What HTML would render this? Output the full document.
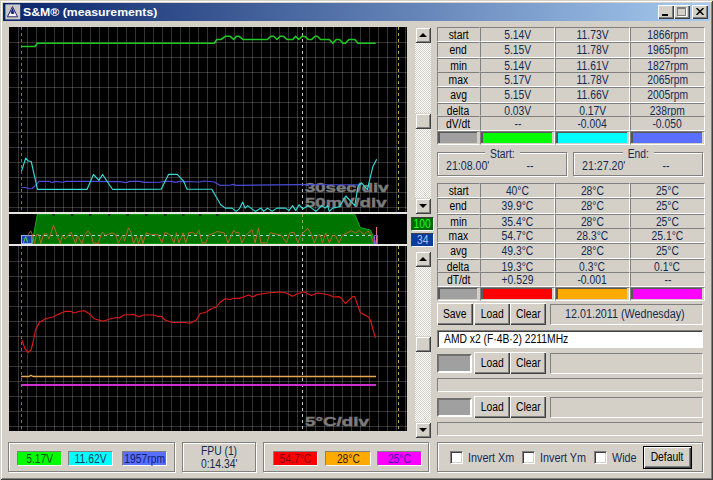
<!DOCTYPE html>
<html><head><meta charset="utf-8"><title>S&amp;M (measurements)</title>
<style>
html,body{margin:0;padding:0;}
body{width:713px;height:480px;overflow:hidden;background:#d4d0c8;position:relative;
 font-family:"Liberation Sans",sans-serif;font-size:12px;line-height:14px;color:#000;}
*{box-sizing:border-box;}
.a{position:absolute;}
.win{left:0;top:0;width:713px;height:480px;background:#d4d0c8;
 box-shadow:inset 1px 1px 0 #d4d0c8, inset -1px -1px 0 #404040, inset 2px 2px 0 #fff, inset -2px -2px 0 #808080;}
.title{left:3px;top:3px;width:707px;height:18px;background:linear-gradient(90deg,#0a246a 0%,#a6caf0 100%);}
.ttext{left:23px;top:4px;height:16px;line-height:16px;color:#fff;font-weight:bold;font-size:11px;white-space:nowrap;transform-origin:0 50%;transform:scaleX(1.114);}
.cb{top:5px;width:16px;height:14px;background:#d4d0c8;
 box-shadow:inset 1px 1px 0 #fff, inset -1px -1px 0 #404040, inset -2px -2px 0 #808080;}
.sunk{border:1px solid;border-color:#808080 #fff #fff #808080;background:#d4d0c8;}
.cell{display:flex;justify-content:center;text-align:center;white-space:nowrap;overflow:visible;line-height:13px;padding-top:1px;}
.t{display:inline-block;transform:scaleX(.86);transform-origin:50% 50%;white-space:nowrap;}
.tl{display:inline-block;transform:scaleX(.86);transform-origin:0 50%;white-space:nowrap;}
.nv{color:#142a52;}
.btn{background:#d4d0c8;display:flex;justify-content:center;text-align:center;padding-top:1px;white-space:nowrap;
 box-shadow:inset 1px 1px 0 #fff, inset -1px -1px 0 #404040, inset -2px -2px 0 #808080;}
.track{background-color:#d4d0c8;background-image:
 linear-gradient(45deg,#fff 25%,transparent 25%,transparent 75%,#fff 75%),
 linear-gradient(45deg,#fff 25%,transparent 25%,transparent 75%,#fff 75%);
 background-size:2px 2px;background-position:0 0,1px 1px;}
.sbb{left:0;width:16px;height:16px;background:#d4d0c8;
 box-shadow:inset 1px 1px 0 #d4d0c8, inset -1px -1px 0 #404040, inset 2px 2px 0 #fff, inset -2px -2px 0 #808080;}
.arr{left:4px;width:0;height:0;border-left:4px solid transparent;border-right:4px solid transparent;}
.up{top:6px;border-bottom:4px solid #000;}
.dn{top:6px;border-top:4px solid #000;}
.sw{border:1px solid;border-color:#606060 #fff #fff #606060;}
.grp{border:1px solid #808080;box-shadow:1px 1px 0 #fff, inset 1px 1px 0 #fff;}
.lbl{height:15px;line-height:13px;padding-top:1px;display:flex;justify-content:center;text-align:center;border:1px solid;border-color:#808080 #fff #fff #808080;white-space:nowrap;}
.chk{width:13px;height:13px;background:#fff;border:1px solid;border-color:#808080 #fff #fff #808080;box-shadow:inset 1px 1px 0 #404040, inset -1px -1px 0 #d4d0c8;}
</style></head>
<body>
<div class="a win"></div>
<div class="a title"></div>
<svg class="a" style="left:5px;top:4px" width="16" height="16" viewBox="0 0 16 16"><rect x="0.4" y="0.4" width="14.8" height="15" fill="#c9c9c9"/><path d="M7.5 2.6 L12.6 12.8 L2.4 12.8 Z" fill="#dcdcec"/><path d="M4.6 10 L10.4 10 L12 12.6 L3 12.6 Z" fill="#f6f6fc"/><path d="M7.5 2.6 L12.6 12.8 L2.4 12.8 Z" fill="none" stroke="#2c2c6c" stroke-width="1"/><circle cx="7.5" cy="8" r="1.9" fill="#3030c0"/><path d="M7.5 4.4 L7.5 6.6 M7.2 8 L8.2 9.6" stroke="#101050" stroke-width="1.1"/></svg>
<div class="a ttext" id="ttext">S&amp;M® (measurements)</div>
<div class="a cb" style="left:658px"><div class="a" style="left:4px;top:9px;width:6px;height:2px;background:#000"></div></div>
<div class="a cb" style="left:674px"><div class="a" style="left:3px;top:2px;width:9px;height:9px;border:1px solid #808080;border-top-width:2px;box-shadow:1px 1px 0 #fff"></div></div>
<div class="a cb" style="left:692px"><svg class="a" style="left:4px;top:3px" width="8" height="7" viewBox="0 0 8 7"><path d="M0.5 0 L7.5 7 M7.5 0 L0.5 7" stroke="#000" stroke-width="1.5"/></svg></div>
<div class="a" style="left:9px;top:27px;width:398px;height:404px;background:#000"></div>
<svg class="a" style="left:9px;top:27px" width="398" height="404" viewBox="9 27 398 404"><rect x="9" y="27" width="398" height="404" fill="#000"/><g fill="#fff" fill-opacity=".2" shape-rendering="crispEdges"><rect x="18" y="27" width="1" height="185"/><rect x="18" y="246" width="1" height="185"/><rect x="27" y="27" width="1" height="185"/><rect x="27" y="246" width="1" height="185"/><rect x="36" y="27" width="1" height="185"/><rect x="36" y="246" width="1" height="185"/><rect x="45" y="27" width="1" height="185"/><rect x="45" y="246" width="1" height="185"/><rect x="54" y="27" width="1" height="185"/><rect x="54" y="246" width="1" height="185"/><rect x="63" y="27" width="1" height="185"/><rect x="63" y="246" width="1" height="185"/><rect x="72" y="27" width="1" height="185"/><rect x="72" y="246" width="1" height="185"/><rect x="81" y="27" width="1" height="185"/><rect x="81" y="246" width="1" height="185"/><rect x="90" y="27" width="1" height="185"/><rect x="90" y="246" width="1" height="185"/><rect x="99" y="27" width="1" height="185"/><rect x="99" y="246" width="1" height="185"/><rect x="108" y="27" width="1" height="185"/><rect x="108" y="246" width="1" height="185"/><rect x="117" y="27" width="1" height="185"/><rect x="117" y="246" width="1" height="185"/><rect x="126" y="27" width="1" height="185"/><rect x="126" y="246" width="1" height="185"/><rect x="135" y="27" width="1" height="185"/><rect x="135" y="246" width="1" height="185"/><rect x="144" y="27" width="1" height="185"/><rect x="144" y="246" width="1" height="185"/><rect x="153" y="27" width="1" height="185"/><rect x="153" y="246" width="1" height="185"/><rect x="162" y="27" width="1" height="185"/><rect x="162" y="246" width="1" height="185"/><rect x="171" y="27" width="1" height="185"/><rect x="171" y="246" width="1" height="185"/><rect x="180" y="27" width="1" height="185"/><rect x="180" y="246" width="1" height="185"/><rect x="189" y="27" width="1" height="185"/><rect x="189" y="246" width="1" height="185"/><rect x="198" y="27" width="1" height="185"/><rect x="198" y="246" width="1" height="185"/><rect x="207" y="27" width="1" height="185"/><rect x="207" y="246" width="1" height="185"/><rect x="216" y="27" width="1" height="185"/><rect x="216" y="246" width="1" height="185"/><rect x="225" y="27" width="1" height="185"/><rect x="225" y="246" width="1" height="185"/><rect x="234" y="27" width="1" height="185"/><rect x="234" y="246" width="1" height="185"/><rect x="243" y="27" width="1" height="185"/><rect x="243" y="246" width="1" height="185"/><rect x="252" y="27" width="1" height="185"/><rect x="252" y="246" width="1" height="185"/><rect x="261" y="27" width="1" height="185"/><rect x="261" y="246" width="1" height="185"/><rect x="270" y="27" width="1" height="185"/><rect x="270" y="246" width="1" height="185"/><rect x="279" y="27" width="1" height="185"/><rect x="279" y="246" width="1" height="185"/><rect x="288" y="27" width="1" height="185"/><rect x="288" y="246" width="1" height="185"/><rect x="297" y="27" width="1" height="185"/><rect x="297" y="246" width="1" height="185"/><rect x="306" y="27" width="1" height="185"/><rect x="306" y="246" width="1" height="185"/><rect x="315" y="27" width="1" height="185"/><rect x="315" y="246" width="1" height="185"/><rect x="324" y="27" width="1" height="185"/><rect x="324" y="246" width="1" height="185"/><rect x="333" y="27" width="1" height="185"/><rect x="333" y="246" width="1" height="185"/><rect x="342" y="27" width="1" height="185"/><rect x="342" y="246" width="1" height="185"/><rect x="351" y="27" width="1" height="185"/><rect x="351" y="246" width="1" height="185"/><rect x="360" y="27" width="1" height="185"/><rect x="360" y="246" width="1" height="185"/><rect x="369" y="27" width="1" height="185"/><rect x="369" y="246" width="1" height="185"/><rect x="378" y="27" width="1" height="185"/><rect x="378" y="246" width="1" height="185"/><rect x="387" y="27" width="1" height="185"/><rect x="387" y="246" width="1" height="185"/><rect x="396" y="27" width="1" height="185"/><rect x="396" y="246" width="1" height="185"/><rect x="405" y="27" width="1" height="185"/><rect x="405" y="246" width="1" height="185"/><rect x="9" y="42" width="398" height="1"/><rect x="9" y="261" width="398" height="1"/><rect x="9" y="57" width="398" height="1"/><rect x="9" y="276" width="398" height="1"/><rect x="9" y="72" width="398" height="1"/><rect x="9" y="291" width="398" height="1"/><rect x="9" y="87" width="398" height="1"/><rect x="9" y="306" width="398" height="1"/><rect x="9" y="102" width="398" height="1"/><rect x="9" y="321" width="398" height="1"/><rect x="9" y="117" width="398" height="1"/><rect x="9" y="336" width="398" height="1"/><rect x="9" y="132" width="398" height="1"/><rect x="9" y="351" width="398" height="1"/><rect x="9" y="147" width="398" height="1"/><rect x="9" y="366" width="398" height="1"/><rect x="9" y="162" width="398" height="1"/><rect x="9" y="381" width="398" height="1"/><rect x="9" y="177" width="398" height="1"/><rect x="9" y="396" width="398" height="1"/><rect x="9" y="192" width="398" height="1"/><rect x="9" y="411" width="398" height="1"/><rect x="9" y="207" width="398" height="1"/><rect x="9" y="426" width="398" height="1"/></g><g shape-rendering="crispEdges"><line x1="21.5" y1="27" x2="21.5" y2="212" stroke="#2e86a4" stroke-width="1" stroke-dasharray="3 3"/><line x1="21.5" y1="246" x2="21.5" y2="431" stroke="#2e86a4" stroke-width="1" stroke-dasharray="3 3"/><line x1="302.5" y1="27" x2="302.5" y2="212" stroke="#c8c8c8" stroke-width="1" stroke-dasharray="3 3"/><line x1="302.5" y1="246" x2="302.5" y2="431" stroke="#c8c8c8" stroke-width="1" stroke-dasharray="3 3"/><line x1="398.5" y1="27" x2="398.5" y2="212" stroke="#c0a458" stroke-width="1" stroke-dasharray="3 3"/><line x1="398.5" y1="246" x2="398.5" y2="431" stroke="#c0a458" stroke-width="1" stroke-dasharray="3 3"/></g><g font-family="Liberation Sans, sans-serif" font-weight="bold" fill="#7c7c7c" stroke="#7c7c7c" stroke-width="0.45"><text x="305" y="191.8" font-size="12.5" textLength="83.5" lengthAdjust="spacingAndGlyphs">30sec/div</text><text x="305" y="206.6" font-size="13.5" textLength="81.5" lengthAdjust="spacingAndGlyphs">50mV/div</text><text x="305" y="426.2" font-size="13.5" textLength="64" lengthAdjust="spacingAndGlyphs">5°C/div</text></g><polyline points="21.5,46.5 35.0,46.5 37.5,43.3 214.3,43.3 216.8,39.5 221.0,39.5 225.2,36.3 230.2,36.3 233.7,39.5 236.5,36.3 239.3,36.3 242.8,39.5 267.3,39.5 270.8,36.3 273.6,36.3 276.9,39.5 280.0,36.3 283.5,36.3 287.0,39.5 292.8,39.5 295.6,36.3 298.7,39.5 301.9,36.3 305.4,36.7 308.2,39.5 311.7,39.5 315.0,36.3 317.3,36.3 320.6,39.5 329.3,39.5 332.8,43.3 336.3,39.5 339.4,39.5 343.0,43.3 345.4,43.3 348.9,39.5 354.8,39.5 358.0,43.3 375.8,43.3" fill="none" stroke="#1ec81e" stroke-width="1.6" stroke-linejoin="round" /><polyline points="21.5,187.5 25.7,187.5 29.0,188.8 32.4,188.5 39.1,181.4 50.0,181.4 52.0,182.6 55.0,181.4 63.0,182.3 66.0,181.4 85.0,181.4 120.0,181.6 126.0,182.6 130.0,181.4 140.0,181.4 144.0,182.4 160.0,182.2 164.0,181.2 172.0,181.4 175.0,182.4 180.0,181.4 200.0,182.0 204.0,181.0 214.3,182.0 220.2,185.4 230.0,185.2 233.0,184.4 236.0,185.4 300.0,184.6 330.0,184.8 360.0,184.8" fill="none" stroke="#4c4cdc" stroke-width="1.15" stroke-linejoin="round" /><polyline points="21.5,171.1 25.7,158.2 28.2,161.0 31.2,161.5 37.5,189.3 87.1,189.3 93.5,174.5 98.9,180.4 102.6,174.5 112.4,189.3 161.2,189.2 168.5,174.4 177.2,174.4 183.6,181.1 187.0,189.2 211.8,189.2 220.7,204.7 225.2,208.1 232.0,208.1 236.2,211.4 239.3,208.9 242.6,202.2 245.2,208.1 247.7,205.6 255.3,211.4 261.1,208.1 263.7,211.4 267.4,208.1 272.1,211.4 276.8,208.1 285.6,208.1 288.9,210.6 292.6,205.6 295.7,210.6 299.0,204.7 302.7,208.9 308.3,205.6 315.9,211.4 321.8,205.6 325.1,208.1 327.6,205.6 329.3,211.4 332.7,208.1 339.4,206.8 345.8,196.0 354.8,205.6 358.1,186.2 361.5,182.8 367.4,189.6 372.8,166.8 376.7,159.3" fill="none" stroke="#34dcd8" stroke-width="1.15" stroke-linejoin="round" /><rect x="9" y="212" width="398" height="2" fill="#e8e6e0" shape-rendering="crispEdges"/><rect x="9" y="244" width="398" height="2" fill="#e8e6e0" shape-rendering="crispEdges"/><polygon points="32,244 37.4,214 354.6,214 360.3,227.6 370.4,230.1 376.7,244" fill="#007400" stroke="#10b010" stroke-width="1"/><rect x="9" y="212" width="398" height="2" fill="#e8e6e0" shape-rendering="crispEdges"/><rect x="9" y="244" width="398" height="2" fill="#e8e6e0" shape-rendering="crispEdges"/><rect x="34.0" y="214" width="2.4" height="1.6" fill="#001800"/><rect x="52.5" y="214" width="2.4" height="1.6" fill="#001800"/><rect x="71.0" y="214" width="2.4" height="1.6" fill="#001800"/><rect x="89.0" y="214" width="2.4" height="1.6" fill="#001800"/><rect x="108.0" y="214" width="2.4" height="1.6" fill="#001800"/><rect x="126.5" y="214" width="2.4" height="1.6" fill="#001800"/><rect x="145.0" y="214" width="2.4" height="1.6" fill="#001800"/><rect x="164.0" y="214" width="2.4" height="1.6" fill="#001800"/><rect x="182.0" y="214" width="2.4" height="1.6" fill="#001800"/><rect x="199.0" y="214" width="2.4" height="1.6" fill="#001800"/><rect x="216.0" y="214" width="2.4" height="1.6" fill="#001800"/><rect x="21.5" y="235.5" width="10.5" height="8" fill="#1c40b0" stroke="#8fb0ff" stroke-width="1"/><line x1="32" y1="235.5" x2="374" y2="235.5" stroke="#a0e0e0" stroke-width="1" stroke-dasharray="3 3" shape-rendering="crispEdges"/><line x1="302.5" y1="214" x2="302.5" y2="244" stroke="#80b080" stroke-width="1" stroke-dasharray="3 3" shape-rendering="crispEdges"/><polyline points="23.2,243.5 25.7,236.6 27.6,242.3" fill="none" stroke="#50d050" stroke-width="1.0" stroke-linejoin="round" /><polyline points="27.6,236.5 28.2,234.7 30.7,230.9 32.6,235.4 34.5,243.6 36.4,234.7 38.9,234.7 40.8,243.6 43.4,234.7 46.5,233.5 49.0,239.1 53.5,225.3 57.9,237.3 60.2,243.6 62.3,235.4 64.8,239.1 71.1,232.2 75.6,243.6 77.5,235.4 81.9,243.6 84.4,235.4 88.2,230.9 91.3,235.4 93.2,242.9 98.3,243.6 100.8,235.4 102.5,232.2 105.7,235.4 112.0,232.8 115.8,234.7 118.3,242.9 122.7,235.4 124.6,241.0 128.4,227.8 130.9,232.2 133.5,243.6 136.6,236.6 138.5,243.6 141.0,236.0 142.9,243.6 146.1,232.8 150.5,234.7 158.1,234.7 161.9,242.9 165.0,232.2 170.7,235.4 173.9,242.9 176.4,232.8 178.9,242.9 183.2,232.8 185.7,242.9 188.8,232.8 192.6,232.2 195.8,234.7 198.9,230.3 202.1,242.9 205.9,242.9 208.4,235.4 217.2,231.6 224.2,232.8 228.0,242.9 233.7,230.3 235.6,232.8 238.7,232.2 241.9,242.9 245.7,235.4 252.0,229.7 255.1,242.9 258.5,227.8 260.8,242.9 266.9,242.9 270.1,232.8 281.5,235.4 286.5,242.9 289.7,232.8 294.1,232.2 297.9,242.9 301.0,234.7 308.0,228.4 311.8,235.4 314.3,242.9 317.4,235.4 320.0,234.7 322.5,242.9 325.7,232.8 329.4,242.9 332.6,235.4 335.8,236.0 338.9,242.9 342.6,235.1 351.5,230.7 355.3,233.3 359.0,230.5 364.1,234.5 367.9,230.7 371.0,235.1 373.6,243.4" fill="none" stroke="#b86628" stroke-width="1.0" stroke-linejoin="round" /><line x1="376.5" y1="227" x2="376.5" y2="244" stroke="#e07080" stroke-width="1"/><rect x="374.5" y="235.5" width="3" height="8" fill="none" stroke="#8060d0" stroke-width="1"/><polyline points="21.8,340.0 25.0,348.8 28.0,352.5 31.0,350.0 33.0,342.5 35.5,330.0 39.3,322.5 45.5,318.8 53.0,317.0 59.3,313.8 65.5,311.3 70.5,311.3 74.3,313.0 79.3,311.3 84.3,310.8 89.3,313.8 94.3,318.8 103.0,321.3 110.5,318.8 116.8,317.5 119.3,318.0 123.8,315.0 133.8,314.5 138.8,316.8 143.8,315.0 153.8,315.0 157.5,316.3 161.3,316.3 165.0,320.0 172.5,322.5 185.0,322.5 190.0,323.3 196.3,320.0 200.0,313.8 206.3,312.0 211.3,308.8 216.3,307.0 220.0,302.5 225.0,298.8 230.0,299.5 233.8,298.3 240.0,298.3 248.8,295.0 252.5,297.0 257.5,294.5 267.5,293.0 280.0,292.0 286.3,293.0 292.5,296.3 297.5,293.8 303.8,291.8 311.3,295.5 317.5,293.0 323.8,294.0 328.4,294.7 334.0,297.0 338.8,296.6 341.6,298.5 345.3,303.5 352.8,296.6 354.7,296.6 360.3,312.5 368.8,317.2 370.7,321.0 375.3,337.9" fill="none" stroke="#e01818" stroke-width="1.15" stroke-linejoin="round" /><polyline points="21.0,376.5 29.0,376.5 31.0,375.3 33.0,376.5 376.0,376.5" fill="none" stroke="#e8a850" stroke-width="1.4" stroke-linejoin="round" /><rect x="21" y="384" width="355" height="2" fill="#d030d0" shape-rendering="crispEdges"/></svg>
<div class="a track" style="left:415px;top:27px;width:16px;height:187px"><div class="a sbb" style="top:0"><div class="a arr up"></div></div><div class="a sbb" style="top:86px"></div><div class="a sbb" style="top:171px"><div class="a arr dn"></div></div></div>
<div class="a track" style="left:415px;top:251px;width:16px;height:187px"><div class="a sbb" style="top:0"><div class="a arr up"></div></div><div class="a sbb" style="top:85px"></div><div class="a sbb" style="top:171px"><div class="a arr dn"></div></div></div>
<div class="a" style="left:411px;top:217px;width:23px;height:14px;background:#006a00;border:1px solid;border-color:#404040 #fff #fff #404040;color:#20ff20;text-align:center;line-height:12px;font-size:12px"><span class="t">100</span></div>
<div class="a" style="left:411px;top:233px;width:23px;height:14px;background:#0a3c9c;border:1px solid;border-color:#404040 #fff #fff #404040;color:#a0c0ff;text-align:center;line-height:12px;font-size:12px"><span class="t">34</span></div>
<div class="a sunk cell" style="left:437px;top:27px;width:43px;height:15px;border-color:#808080 #d4d0c8 #fff #808080;"><span class="t">start</span></div><div class="a sunk cell nv" style="left:480px;top:27px;width:75px;height:15px;border-color:#808080 #fff #fff #808080;"><span class="t">5.14V</span></div><div class="a sunk cell nv" style="left:555px;top:27px;width:75px;height:15px;border-color:#808080 #fff #fff #808080;"><span class="t">11.73V</span></div><div class="a sunk cell nv" style="left:630px;top:27px;width:75px;height:15px;border-color:#808080 #fff #fff #808080;"><span class="t">1866rpm</span></div><div class="a sunk cell" style="left:437px;top:42px;width:43px;height:16px;border-color:#808080 #d4d0c8 #fff #808080;"><span class="t">end</span></div><div class="a sunk cell nv" style="left:480px;top:42px;width:75px;height:16px;border-color:#808080 #fff #fff #808080;"><span class="t">5.15V</span></div><div class="a sunk cell nv" style="left:555px;top:42px;width:75px;height:16px;border-color:#808080 #fff #fff #808080;"><span class="t">11.78V</span></div><div class="a sunk cell nv" style="left:630px;top:42px;width:75px;height:16px;border-color:#808080 #fff #fff #808080;"><span class="t">1965rpm</span></div><div class="a sunk cell" style="left:437px;top:58px;width:43px;height:14px;border-color:#808080 #d4d0c8 #d4d0c8 #808080;"><span class="t">min</span></div><div class="a sunk cell nv" style="left:480px;top:58px;width:75px;height:14px;border-color:#808080 #fff #d4d0c8 #808080;"><span class="t">5.14V</span></div><div class="a sunk cell nv" style="left:555px;top:58px;width:75px;height:14px;border-color:#808080 #fff #d4d0c8 #808080;"><span class="t">11.61V</span></div><div class="a sunk cell nv" style="left:630px;top:58px;width:75px;height:14px;border-color:#808080 #fff #d4d0c8 #808080;"><span class="t">1827rpm</span></div><div class="a sunk cell" style="left:437px;top:72px;width:43px;height:15px;border-color:#808080 #d4d0c8 #fff #808080;"><span class="t">max</span></div><div class="a sunk cell nv" style="left:480px;top:72px;width:75px;height:15px;border-color:#808080 #fff #fff #808080;"><span class="t">5.17V</span></div><div class="a sunk cell nv" style="left:555px;top:72px;width:75px;height:15px;border-color:#808080 #fff #fff #808080;"><span class="t">11.78V</span></div><div class="a sunk cell nv" style="left:630px;top:72px;width:75px;height:15px;border-color:#808080 #fff #fff #808080;"><span class="t">2065rpm</span></div><div class="a sunk cell" style="left:437px;top:87px;width:43px;height:16px;border-color:#808080 #d4d0c8 #fff #808080;"><span class="t">avg</span></div><div class="a sunk cell nv" style="left:480px;top:87px;width:75px;height:16px;border-color:#808080 #fff #fff #808080;"><span class="t">5.15V</span></div><div class="a sunk cell nv" style="left:555px;top:87px;width:75px;height:16px;border-color:#808080 #fff #fff #808080;"><span class="t">11.66V</span></div><div class="a sunk cell nv" style="left:630px;top:87px;width:75px;height:16px;border-color:#808080 #fff #fff #808080;"><span class="t">2005rpm</span></div><div class="a sunk cell" style="left:437px;top:103px;width:43px;height:13px;border-color:#808080 #d4d0c8 #d4d0c8 #808080;"><span class="t">delta</span></div><div class="a sunk cell nv" style="left:480px;top:103px;width:75px;height:13px;border-color:#808080 #fff #d4d0c8 #808080;"><span class="t">0.03V</span></div><div class="a sunk cell nv" style="left:555px;top:103px;width:75px;height:13px;border-color:#808080 #fff #d4d0c8 #808080;"><span class="t">0.17V</span></div><div class="a sunk cell nv" style="left:630px;top:103px;width:75px;height:13px;border-color:#808080 #fff #d4d0c8 #808080;"><span class="t">238rpm</span></div><div class="a sunk cell" style="left:437px;top:116px;width:43px;height:15px;border-color:#808080 #d4d0c8 #fff #808080;"><span class="t">dV/dt</span></div><div class="a sunk cell nv" style="left:480px;top:116px;width:75px;height:15px;border-color:#808080 #fff #fff #808080;"><span class="t">--</span></div><div class="a sunk cell nv" style="left:555px;top:116px;width:75px;height:15px;border-color:#808080 #fff #fff #808080;"><span class="t">-0.004</span></div><div class="a sunk cell nv" style="left:630px;top:116px;width:75px;height:15px;border-color:#808080 #fff #fff #808080;"><span class="t">-0.050</span></div><div class="a sunk" style="left:437px;top:131px;width:43px;height:14px;border-color:#808080 #d4d0c8 #fff #808080"><div class="a" style="left:0;top:0;right:2px;bottom:1px;background:#a0a0a0;border:solid #585858;border-width:1px 0 0 2px"></div></div><div class="a sunk" style="left:480px;top:131px;width:75px;height:14px;border-color:#808080 #fff #fff #808080"><div class="a" style="left:0;top:0;right:2px;bottom:1px;background:#00ff00;border:solid #585858;border-width:1px 0 0 2px"></div></div><div class="a sunk" style="left:555px;top:131px;width:75px;height:14px;border-color:#808080 #fff #fff #808080"><div class="a" style="left:0;top:0;right:2px;bottom:1px;background:#00ffff;border:solid #585858;border-width:1px 0 0 2px"></div></div><div class="a sunk" style="left:630px;top:131px;width:75px;height:14px;border-color:#808080 #fff #fff #808080"><div class="a" style="left:0;top:0;right:2px;bottom:1px;background:#5a6eff;border:solid #585858;border-width:1px 0 0 2px"></div></div>
<div class="a sunk cell" style="left:437px;top:183px;width:43px;height:15px;border-color:#808080 #d4d0c8 #fff #808080;"><span class="t">start</span></div><div class="a sunk cell nv" style="left:480px;top:183px;width:75px;height:15px;border-color:#808080 #fff #fff #808080;"><span class="t">40°C</span></div><div class="a sunk cell nv" style="left:555px;top:183px;width:75px;height:15px;border-color:#808080 #fff #fff #808080;"><span class="t">28°C</span></div><div class="a sunk cell nv" style="left:630px;top:183px;width:75px;height:15px;border-color:#808080 #fff #fff #808080;"><span class="t">25°C</span></div><div class="a sunk cell" style="left:437px;top:198px;width:43px;height:16px;border-color:#808080 #d4d0c8 #fff #808080;"><span class="t">end</span></div><div class="a sunk cell nv" style="left:480px;top:198px;width:75px;height:16px;border-color:#808080 #fff #fff #808080;"><span class="t">39.9°C</span></div><div class="a sunk cell nv" style="left:555px;top:198px;width:75px;height:16px;border-color:#808080 #fff #fff #808080;"><span class="t">28°C</span></div><div class="a sunk cell nv" style="left:630px;top:198px;width:75px;height:16px;border-color:#808080 #fff #fff #808080;"><span class="t">25°C</span></div><div class="a sunk cell" style="left:437px;top:214px;width:43px;height:14px;border-color:#808080 #d4d0c8 #d4d0c8 #808080;"><span class="t">min</span></div><div class="a sunk cell nv" style="left:480px;top:214px;width:75px;height:14px;border-color:#808080 #fff #d4d0c8 #808080;"><span class="t">35.4°C</span></div><div class="a sunk cell nv" style="left:555px;top:214px;width:75px;height:14px;border-color:#808080 #fff #d4d0c8 #808080;"><span class="t">28°C</span></div><div class="a sunk cell nv" style="left:630px;top:214px;width:75px;height:14px;border-color:#808080 #fff #d4d0c8 #808080;"><span class="t">25°C</span></div><div class="a sunk cell" style="left:437px;top:228px;width:43px;height:15px;border-color:#808080 #d4d0c8 #fff #808080;"><span class="t">max</span></div><div class="a sunk cell nv" style="left:480px;top:228px;width:75px;height:15px;border-color:#808080 #fff #fff #808080;"><span class="t">54.7°C</span></div><div class="a sunk cell nv" style="left:555px;top:228px;width:75px;height:15px;border-color:#808080 #fff #fff #808080;"><span class="t">28.3°C</span></div><div class="a sunk cell nv" style="left:630px;top:228px;width:75px;height:15px;border-color:#808080 #fff #fff #808080;"><span class="t">25.1°C</span></div><div class="a sunk cell" style="left:437px;top:243px;width:43px;height:16px;border-color:#808080 #d4d0c8 #fff #808080;"><span class="t">avg</span></div><div class="a sunk cell nv" style="left:480px;top:243px;width:75px;height:16px;border-color:#808080 #fff #fff #808080;"><span class="t">49.3°C</span></div><div class="a sunk cell nv" style="left:555px;top:243px;width:75px;height:16px;border-color:#808080 #fff #fff #808080;"><span class="t">28°C</span></div><div class="a sunk cell nv" style="left:630px;top:243px;width:75px;height:16px;border-color:#808080 #fff #fff #808080;"><span class="t">25°C</span></div><div class="a sunk cell" style="left:437px;top:259px;width:43px;height:13px;border-color:#808080 #d4d0c8 #d4d0c8 #808080;"><span class="t">delta</span></div><div class="a sunk cell nv" style="left:480px;top:259px;width:75px;height:13px;border-color:#808080 #fff #d4d0c8 #808080;"><span class="t">19.3°C</span></div><div class="a sunk cell nv" style="left:555px;top:259px;width:75px;height:13px;border-color:#808080 #fff #d4d0c8 #808080;"><span class="t">0.3°C</span></div><div class="a sunk cell nv" style="left:630px;top:259px;width:75px;height:13px;border-color:#808080 #fff #d4d0c8 #808080;"><span class="t">0.1°C</span></div><div class="a sunk cell" style="left:437px;top:272px;width:43px;height:15px;border-color:#808080 #d4d0c8 #fff #808080;"><span class="t">dT/dt</span></div><div class="a sunk cell nv" style="left:480px;top:272px;width:75px;height:15px;border-color:#808080 #fff #fff #808080;"><span class="t">+0.529</span></div><div class="a sunk cell nv" style="left:555px;top:272px;width:75px;height:15px;border-color:#808080 #fff #fff #808080;"><span class="t">-0.001</span></div><div class="a sunk cell nv" style="left:630px;top:272px;width:75px;height:15px;border-color:#808080 #fff #fff #808080;"><span class="t">--</span></div><div class="a sunk" style="left:437px;top:287px;width:43px;height:14px;border-color:#808080 #d4d0c8 #fff #808080"><div class="a" style="left:0;top:0;right:2px;bottom:1px;background:#a0a0a0;border:solid #585858;border-width:1px 0 0 2px"></div></div><div class="a sunk" style="left:480px;top:287px;width:75px;height:14px;border-color:#808080 #fff #fff #808080"><div class="a" style="left:0;top:0;right:2px;bottom:1px;background:#ff0000;border:solid #585858;border-width:1px 0 0 2px"></div></div><div class="a sunk" style="left:555px;top:287px;width:75px;height:14px;border-color:#808080 #fff #fff #808080"><div class="a" style="left:0;top:0;right:2px;bottom:1px;background:#ffaa00;border:solid #585858;border-width:1px 0 0 2px"></div></div><div class="a sunk" style="left:630px;top:287px;width:75px;height:14px;border-color:#808080 #fff #fff #808080"><div class="a" style="left:0;top:0;right:2px;bottom:1px;background:#ff00ff;border:solid #585858;border-width:1px 0 0 2px"></div></div>
<div class="a grp" style="left:437px;top:152px;width:130px;height:24px"></div><div class="a nv" style="left:485px;top:148px;width:35px;height:13px;background:#d4d0c8;text-align:center;line-height:13px"><span class="t">Start:</span></div>
<div class="a nv" style="left:446px;top:159px;width:60px;height:14px"><span class="tl" style="transform:scaleX(.885)">21:08.00'</span></div>
<div class="a nv" style="left:520px;top:159px;width:20px;height:14px;text-align:center"><span class="t">--</span></div>
<div class="a grp" style="left:573px;top:152px;width:130px;height:24px"></div><div class="a nv" style="left:623px;top:148px;width:31px;height:13px;background:#d4d0c8;text-align:center;line-height:13px"><span class="t">End:</span></div>
<div class="a nv" style="left:582px;top:159px;width:60px;height:14px"><span class="tl" style="transform:scaleX(.885)">21:27.20'</span></div>
<div class="a nv" style="left:656px;top:159px;width:20px;height:14px;text-align:center"><span class="t">--</span></div>
<div class="a btn" style="left:437px;top:303px;width:36px;height:22px;line-height:20px"><span class="t">Save</span></div>
<div class="a btn" style="left:474px;top:303px;width:36px;height:22px;line-height:20px"><span class="t">Load</span></div>
<div class="a btn" style="left:510px;top:303px;width:36px;height:22px;line-height:20px"><span class="t">Clear</span></div>
<div class="a sunk nv" style="left:550px;top:304px;width:153px;height:21px;text-align:center;line-height:19px"><span class="t" style="transform:scaleX(.895);margin-right:3px">12.01.2011 (Wednesday)</span></div>
<div class="a" style="left:437px;top:330px;width:266px;height:18px;background:#fff;border:1px solid;border-color:#808080 #fff #fff #808080;box-shadow:inset 1px 1px 0 #404040;line-height:16px;padding-left:6px"><span class="tl">AMD x2 (F·4B·2) 2211MHz</span></div>
<div class="a" style="left:437px;top:354px;width:35px;height:19px;background:#a0a0a0;border:2px solid;border-color:#707070 #fff #fff #707070"></div><div class="a btn" style="left:474px;top:352px;width:36px;height:22px;line-height:20px"><span class="t">Load</span></div><div class="a btn" style="left:510px;top:352px;width:36px;height:22px;line-height:20px"><span class="t">Clear</span></div><div class="a sunk" style="left:550px;top:353px;width:153px;height:21px"></div><div class="a sunk" style="left:437px;top:378px;width:266px;height:14px"></div>
<div class="a" style="left:437px;top:398px;width:35px;height:19px;background:#a0a0a0;border:2px solid;border-color:#707070 #fff #fff #707070"></div><div class="a btn" style="left:474px;top:396px;width:36px;height:22px;line-height:20px"><span class="t">Load</span></div><div class="a btn" style="left:510px;top:396px;width:36px;height:22px;line-height:20px"><span class="t">Clear</span></div><div class="a sunk" style="left:550px;top:397px;width:153px;height:21px"></div><div class="a sunk" style="left:437px;top:422px;width:266px;height:14px"></div>
<div class="a grp" style="left:437px;top:442px;width:266px;height:30px"></div>
<div class="a chk" style="left:450px;top:451px"></div><div class="a nv" style="left:468px;top:451px;height:14px;white-space:nowrap"><span class="tl" style="transform:scaleX(.9)">Invert Xm</span></div>
<div class="a chk" style="left:522px;top:451px"></div><div class="a nv" style="left:540px;top:451px;height:14px;white-space:nowrap"><span class="tl" style="transform:scaleX(.9)">Invert Ym</span></div>
<div class="a chk" style="left:594px;top:451px"></div><div class="a nv" style="left:612px;top:451px;height:14px;white-space:nowrap"><span class="tl" style="transform:scaleX(.9)">Wide</span></div>
<div class="a" style="left:643px;top:446px;width:49px;height:23px;border:1px solid #000"></div>
<div class="a btn" style="left:644px;top:447px;width:47px;height:21px;line-height:19px"><span class="t">Default</span></div>
<div class="a grp" style="left:8px;top:442px;width:167px;height:30px"></div>
<div class="a grp" style="left:182px;top:442px;width:74px;height:30px"></div>
<div class="a grp" style="left:263px;top:442px;width:166px;height:30px"></div>
<div class="a lbl" style="left:17px;top:451px;width:45px;background:#00ff00;color:#005000"><span class="t">5.17V</span></div>
<div class="a lbl" style="left:68px;top:451px;width:45px;background:#00ffff;color:#0c3c5c"><span class="t">11.62V</span></div>
<div class="a lbl" style="left:122px;top:451px;width:45px;background:#5a6eff;color:#10206c"><span class="t">1957rpm</span></div>
<div class="a lbl" style="left:273px;top:451px;width:45px;background:#ff0000;color:#800010"><span class="t">54.7°C</span></div>
<div class="a lbl" style="left:325px;top:451px;width:46px;background:#ffaa00;color:#402000"><span class="t">28°C</span></div>
<div class="a lbl" style="left:377px;top:451px;width:45px;background:#ff00ff;color:#5010a0"><span class="t">25°C</span></div>
<div class="a nv" style="left:183px;top:445px;width:72px;height:13px;text-align:center;line-height:13px"><span class="t">FPU (1)</span></div>
<div class="a nv" style="left:183px;top:458px;width:72px;height:13px;text-align:center;line-height:13px"><span class="t">0:14.34'</span></div>
</body></html>
